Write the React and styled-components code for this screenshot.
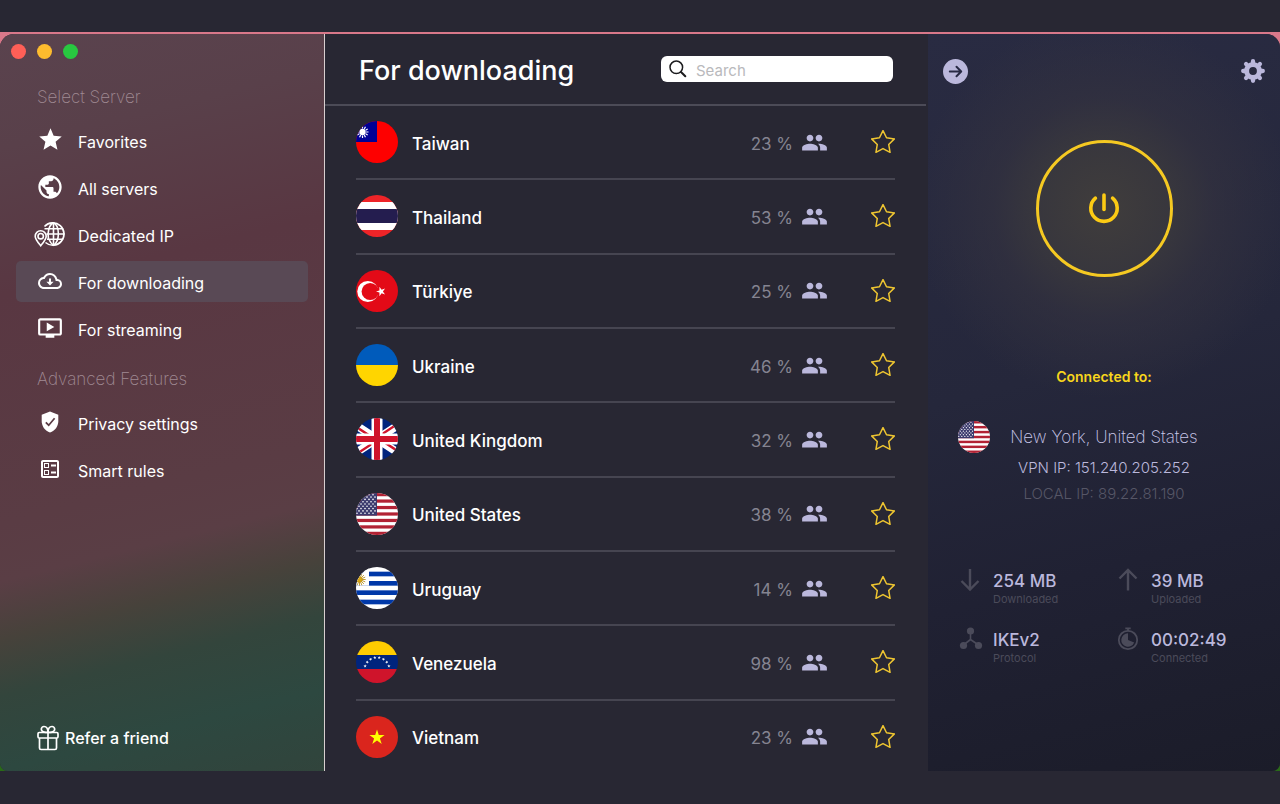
import { useState } from 'react'
import styled, { createGlobalStyle, css } from 'styled-components'
import { MdStar, MdPublic, MdOndemandVideo, MdOutlineBallot, MdPeople } from 'react-icons/md'

const star = (cx, cy, r, turn = 0, inner = 0.382) =>
  Array.from({ length: 10 }, (_, i) => {
    const a = ((i * 36 - 90 + turn) * Math.PI) / 180
    const d = i % 2 ? r * inner : r
    return `${(cx + d * Math.cos(a)).toFixed(2)},${(cy + d * Math.sin(a)).toFixed(2)}`
  }).join(' ')

const rays = (cx, cy, from, to, count) =>
  Array.from({ length: count }, (_, i) => {
    const a = (i * 2 * Math.PI) / count
    return `M${(cx + from * Math.cos(a)).toFixed(2)} ${(cy + from * Math.sin(a)).toFixed(2)}L${(cx + to * Math.cos(a)).toFixed(2)} ${(cy + to * Math.sin(a)).toFixed(2)}`
  }).join('')

/* flags, each one on a 42 x 42 square that the circle cuts */

const usStars = []
for (let row = 0; row < 9; row++) {
  for (let col = 0; col < 6; col++) {
    const x = 1 + col * 4 + (row % 2 ? 2 : 0)
    if (x < 21) usStars.push([x, 1.8 + row * 2.3])
  }
}

const flags = {
  tw: (
    <>
      <rect width="42" height="42" fill="#fe0000" />
      <rect width="21" height="21" fill="#000095" />
      <circle cx="6.5" cy="11" r="3.2" fill="#fff" />
      <path d={rays(6.5, 11, 3.6, 6, 12)} stroke="#fff" strokeWidth="1.2" />
    </>
  ),
  th: (
    <>
      <rect width="42" height="42" fill="#ee2428" />
      <rect y="7" width="42" height="28" fill="#fff" />
      <rect y="14" width="42" height="14" fill="#241d4f" />
    </>
  ),
  tr: (
    <>
      <rect width="42" height="42" fill="#e30a17" />
      <circle cx="11.8" cy="21.5" r="10.5" fill="#fff" />
      <circle cx="14.2" cy="21.5" r="8.6" fill="#e30a17" />
      <polygon points={star(25, 21.5, 5, -90)} fill="#fff" />
    </>
  ),
  ua: (
    <>
      <rect width="42" height="21" fill="#005bbb" />
      <rect y="21" width="42" height="21" fill="#ffd500" />
    </>
  ),
  gb: (
    <>
      <rect width="42" height="42" fill="#00247d" />
      <path d="M-14 -2L56 44M56 -2L-14 44" stroke="#fff" strokeWidth="8" />
      <path d="M-14 -0.4L21 22.6M56 -3.6L21 19.4M-14 45.6L21 22.6M56 42.4L21 19.4" stroke="#cf142b" strokeWidth="2.4" />
      <path d="M21 0V42M0 21H42" stroke="#fff" strokeWidth="11" />
      <path d="M21 0V42M0 21H42" stroke="#cf142b" strokeWidth="6" />
    </>
  ),
  us: (
    <>
      <rect width="42" height="42" fill="#fff" />
      {[0, 2, 4, 6, 8, 10, 12].map((n) => (
        <rect key={n} y={(n * 42) / 13} width="42" height={42 / 13} fill="#b22234" />
      ))}
      <rect width="21" height={(42 / 13) * 7} fill="#3c3b6e" />
      {usStars.map(([x, y]) => (
        <circle key={`${x}-${y}`} cx={x} cy={y} r="0.8" fill="#fff" />
      ))}
    </>
  ),
  uy: (
    <>
      <rect width="42" height="42" fill="#fff" />
      {[1, 3, 5, 7].map((n) => (
        <rect key={n} y={(n * 42) / 9} width="42" height={42 / 9} fill="#0038a8" />
      ))}
      <rect width="13" height="18.7" fill="#fff" />
      <circle cx="3.5" cy="12.5" r="3" fill="#d9a514" />
      <path d={rays(3.5, 12.5, 2.5, 6.2, 16)} stroke="#b8901f" strokeWidth="0.9" />
    </>
  ),
  ve: (
    <>
      <rect width="42" height="14" fill="#ffcc00" />
      <rect y="14" width="42" height="14" fill="#00247d" />
      <rect y="28" width="42" height="14" fill="#cf142b" />
      {[-72, -51, -31, -10, 10, 31, 51, 72].map((deg) => {
        const a = (deg * Math.PI) / 180
        return <polygon key={deg} points={star(21 + 12.5 * Math.sin(a), 29 - 12.5 * Math.cos(a), 1.8, deg)} fill="#fff" />
      })}
    </>
  ),
  vn: (
    <>
      <rect width="42" height="42" fill="#da251d" />
      <polygon points={star(21, 21.5, 8)} fill="#ffff00" />
    </>
  ),
}

const servers = [
  { code: 'tw', name: 'Taiwan', load: 23 },
  { code: 'th', name: 'Thailand', load: 53 },
  { code: 'tr', name: 'Türkiye', load: 25 },
  { code: 'ua', name: 'Ukraine', load: 46 },
  { code: 'gb', name: 'United Kingdom', load: 32 },
  { code: 'us', name: 'United States', load: 38 },
  { code: 'uy', name: 'Uruguay', load: 14 },
  { code: 've', name: 'Venezuela', load: 98 },
  { code: 'vn', name: 'Vietnam', load: 23 },
]

/* icons */

const DedicatedIcon = () => (
  <svg width="32" height="26" viewBox="0 0 32 26" fill="none" stroke="currentColor" strokeWidth="1.6">
    <path d="M10.5 5.5A11.2 11.2 0 1 1 11.5 21.5" />
    <path d="M14.5 18C13.2 11 15 4 19.5 1.8C26 5 26 20 19.5 24.2C17.6 23 16.2 21.2 15.3 19" />
    <path d="M19.5 1.8V24.2M10.5 7.7H29.2M12.5 13H30.7M13 18.3H29.2" />
    <path d="M6.7 24.8C3.5 20.8 1.2 18.2 1.2 15.2A5.5 5.5 0 0 1 12.2 15.2C12.2 18.2 9.9 20.8 6.7 24.8Z" />
    <circle cx="6.7" cy="15.2" r="2.7" />
  </svg>
)

const CloudIcon = () => (
  <svg width="24" height="24" viewBox="0 0 24 24" fill="currentColor">
    <path d="M19.35 10.04A7.49 7.49 0 0 0 12 4C9.11 4 6.6 5.64 5.35 8.04A5.994 5.994 0 0 0 0 14c0 3.31 2.69 6 6 6h13c2.76 0 5-2.24 5-5 0-2.64-2.05-4.78-4.65-4.96zM19 18H6c-2.21 0-4-1.79-4-4 0-2.05 1.53-3.76 3.56-3.97l1.07-.11.5-.95A5.469 5.469 0 0 1 12 6c2.62 0 4.88 1.86 5.39 4.43l.3 1.5 1.53.11A2.98 2.98 0 0 1 22 15c0 1.65-1.35 3-3 3z" />
    <path d="M11 9.5h2v3.3h2.6L12 16.4l-3.6-3.6H11z" />
  </svg>
)

const ShieldIcon = () => (
  <svg width="24" height="24" viewBox="0 0 24 24">
    <path d="M12 1.5L20.3 4.7V11C20.3 16.5 17 20.7 12 22.5C7 20.7 3.7 16.5 3.7 11V4.7Z" fill="currentColor" />
    <path d="M7.8 12.3L10.7 15.2L16.6 8.3" fill="none" stroke="#5a3b44" strokeWidth="1.7" />
  </svg>
)

const GiftIcon = () => (
  <svg width="22" height="26" viewBox="0 0 22 26" fill="none" stroke="currentColor" strokeWidth="1.7" strokeLinejoin="round">
    <rect x="1" y="7.5" width="20" height="5.5" rx="1.2" />
    <path d="M2.5 13V23A1.5 1.5 0 0 0 4 24.5H18A1.5 1.5 0 0 0 19.5 23V13M11 7.5V24.5" />
    <path d="M11 7.5C7 7.5 4.3 6.5 4.3 4.2C4.3 2.6 5.5 1.5 7 1.5C9.5 1.5 11 4 11 7.5ZM11 7.5C15 7.5 17.7 6.5 17.7 4.2C17.7 2.6 16.5 1.5 15 1.5C12.5 1.5 11 4 11 7.5Z" />
  </svg>
)

const SearchIcon = () => (
  <svg width="18" height="18" viewBox="0 0 18 18" fill="none" stroke="#1c1c1e" strokeLinecap="round">
    <circle cx="7.3" cy="7.3" r="6.3" strokeWidth="1.5" />
    <path d="M12 12L16.3 16.3" strokeWidth="2" />
  </svg>
)

const StarOutline = () => (
  <svg width="24" height="24" viewBox="0 0 24 24" fill="none" stroke="#eec531" strokeWidth="1.5" strokeLinejoin="round">
    <polygon points={star(12, 12.6, 12, 0, 0.5)} />
  </svg>
)

const ArrowCircle = () => (
  <svg width="26" height="26" viewBox="0 0 26 26">
    <circle cx="12.5" cy="13.5" r="12.5" fill="#bbb8dc" />
    <path d="M6.800 13.500H18M13.500 8.800L18.200 13.500L13.500 18.200" fill="none" stroke="#282a44" strokeWidth="2" strokeLinecap="round" strokeLinejoin="round" />
  </svg>
)

const GearIcon = () => (
  <svg width="24" height="24" viewBox="0 0 24 24">
    <circle cx="12" cy="12" r="6.4" fill="none" stroke="#bbb8dc" strokeWidth="5" />
    <path d={rays(12, 12, 7.5, 9.8, 8)} stroke="#bbb8dc" strokeWidth="4.3" strokeLinecap="round" />
  </svg>
)

const PowerIcon = () => (
  <svg width="32" height="32" viewBox="0 0 32 32" fill="none" stroke="#fccb14" strokeWidth="3.6" strokeLinecap="round">
    <path d="M7.4 5.2A13.2 13.2 0 1 0 24.6 5.2" />
    <path d="M16 2V16.5" />
  </svg>
)

const ArrowIcon = ({ up }) => (
  <svg width="26" height="26" viewBox="0 0 26 26" fill="none" stroke="currentColor" strokeWidth="2.4">
    <path d={up ? 'M12 23.5V3M3.5 11.5L12 3L20.5 11.5' : 'M12 2V22.5M3.5 14L12 22.5L20.5 14'} />
  </svg>
)

const NodesIcon = () => (
  <svg width="26" height="26" viewBox="0 0 26 26" fill="currentColor">
    <circle cx="12.5" cy="5" r="3.6" />
    <circle cx="5.5" cy="19.500" r="3.600" />
    <circle cx="20.5" cy="19.500" r="3.600" />
    <path d="M12.500 6V13.500M12.500 13.500L5.500 19M12.500 13.500L20.500 19" fill="none" stroke="currentColor" strokeWidth="1.6" />
  </svg>
)

const TimerIcon = () => (
  <svg width="26" height="26" viewBox="0 0 26 26" fill="none" stroke="currentColor">
    <circle cx="12" cy="14" r="9.2" strokeWidth="1.8" />
    <path d="M9.3 2.3H14.7M12 2.5V5" strokeWidth="1.8" />
    <path d="M12 14V7.3A6.7 6.7 0 1 0 18.200 16.500Z" fill="currentColor" stroke="none" />
  </svg>
)

const mainLinks = [
  { label: 'Favorites', icon: <MdStar size={27} /> },
  { label: 'All servers', icon: <MdPublic size={28} /> },
  { label: 'Dedicated IP', icon: <DedicatedIcon /> },
  { label: 'For downloading', icon: <CloudIcon /> },
  { label: 'For streaming', icon: <MdOndemandVideo size={26} /> },
]

const advancedLinks = [
  { label: 'Privacy settings', icon: <ShieldIcon /> },
  { label: 'Smart rules', icon: <MdOutlineBallot size={24} /> },
]

const stats = [
  { icon: <ArrowIcon />, value: '254 MB', label: 'Downloaded' },
  { icon: <ArrowIcon up />, value: '39 MB', label: 'Uploaded' },
  { icon: <NodesIcon />, value: 'IKEv2', label: 'Protocol' },
  { icon: <TimerIcon />, value: '00:02:49', label: 'Connected' },
]

const Flag = ({ code, size }) => (
  <FlagCircle viewBox="0 0 42 42" $size={size} aria-hidden="true">
    {flags[code]}
  </FlagCircle>
)

const App = () => {
  const [section, setSection] = useState('For downloading')
  const [search, setSearch] = useState('')

  const visible = servers.filter((s) => s.name.toLowerCase().includes(search.toLowerCase()))

  const renderLinks = (links) => (
    <NavList>
      {links.map(({ label, icon }) => (
        <li key={label}>
          <NavButton type="button" $active={section === label} onClick={() => setSection(label)}>
            <NavIcon>{icon}</NavIcon>
            {label}
          </NavButton>
        </li>
      ))}
    </NavList>
  )

  return (
    <>
      <GlobalStyle />
      <Desktop>
        <Window>
          <Sidebar>
            <Lights>
              <Light type="button" aria-label="Close" $color="#ff5f57" />
              <Light type="button" aria-label="Minimize" $color="#febc2e" />
              <Light type="button" aria-label="Zoom" $color="#28c840" />
            </Lights>
            <NavTitle>Select Server</NavTitle>
            {renderLinks(mainLinks)}
            <NavTitle>Advanced Features</NavTitle>
            {renderLinks(advancedLinks)}
            <Refer href="#refer"><GiftIcon />Refer a friend</Refer>
          </Sidebar>

          <Main>
            <Header>
              <h1>{section}</h1>
              <SearchBox>
                <SearchIcon />
                <input type="text" aria-label="Search" placeholder="Search" value={search} onChange={(e) => setSearch(e.target.value)} />
              </SearchBox>
            </Header>
            <ServerList>
              {visible.map(({ code, name, load }) => (
                <ServerRow key={code}>
                  <Flag code={code} size={42} />
                  <ServerName>{name}</ServerName>
                  <Load><span>{load} %</span><MdPeople size={27} /></Load>
                  <IconButton type="button" aria-label={`Add ${name} to favorites`}><StarOutline /></IconButton>
                </ServerRow>
              ))}
            </ServerList>
          </Main>

          <Status>
            <StatusBar>
              <IconButton type="button" aria-label="Collapse"><ArrowCircle /></IconButton>
              <IconButton type="button" aria-label="Settings"><GearIcon /></IconButton>
            </StatusBar>
            <PowerButton type="button" aria-label="Disconnect"><PowerIcon /></PowerButton>
            <Connected>Connected to:</Connected>
            <Place>
              <Flag code="us" size={32} />
              <span>New York, United States</span>
            </Place>
            <Address>VPN IP: 151.240.205.252</Address>
            <Address $dim>LOCAL IP: 89.22.81.190</Address>
            <Stats>
              {stats.map(({ icon, value, label }) => (
                <Stat key={label}>
                  {icon}
                  <div>
                    <strong>{value}</strong>
                    <small>{label}</small>
                  </div>
                </Stat>
              ))}
            </Stats>
          </Status>
        </Window>
      </Desktop>
    </>
  )
}

export default App

const GlobalStyle = createGlobalStyle`
  * {
    box-sizing: border-box;
  }

  body {
    margin: 0;
    background: #282733;
    color: #fff;
    font-family: Inter, "Liberation Sans", sans-serif;
  }

  button, input {
    font: inherit;
    color: inherit;
  }

  h1, h2, p, ul {
    margin: 0;
    padding: 0;
    font-weight: 400;
    list-style: none;
  }

  svg {
    display: block;
    flex-shrink: 0;
  }
`;

const Desktop = styled.div`
  margin: 32px 0 33px;
  padding-top: 2px;
  background: linear-gradient(#d9788a, #c06070 50%, #2a6a18 95%);
`;

const Window = styled.div`
  display: grid;
  grid-template-columns: 325px minmax(0, 1fr) 352px;
  height: calc(100dvh - 67px);
  min-height: 700px;
  border-radius: 14px 14px 8px 8px;
  overflow: hidden;
  background: #282733;
`;

const Sidebar = styled.nav`
  display: flex;
  flex-direction: column;
  padding: 0 16px;
  border-right: 1px solid #d8cfd0;
  background: linear-gradient(166deg, #5a434e 0%, #59404a 14%, #593742 32%, #5a3c44 60%, #5a3e45 67%, #47423b 74%, #33453c 81%, #2d4840 90%, #31443c 100%);
`;

const Lights = styled.div`
  display: flex;
  gap: 11px;
  height: 36px;
  margin-left: -5px;
  padding-top: 10px;
`;

const Light = styled.button`
  width: 15px;
  height: 15px;
  padding: 0;
  border: none;
  border-radius: 50%;
  background: ${({ $color }) => $color};
`;

const NavTitle = styled.h2`
  padding: 17px 21px 13px;
  font-size: 17px;
  font-weight: 200;
  line-height: 20px;
  color: #a08a93;

  ul + & {
    padding-top: 20px;
  }
`;

const NavList = styled.ul`
  display: grid;
  gap: 6px;
`;

const NavButton = styled.button`
  display: flex;
  align-items: center;
  gap: 11px;
  width: 100%;
  height: 41px;
  padding: 2px 17px 0;
  border: none;
  border-radius: 5px;
  background: ${({ $active }) => ($active ? '#594955' : 'transparent')};
  font-size: 16px;
  text-align: left;
  cursor: pointer;
`;

const NavIcon = styled.span`
  display: flex;
  justify-content: center;
  width: 34px;
  padding-bottom: 4px;
`;

const Refer = styled.a`
  display: flex;
  align-items: center;
  gap: 6px;
  margin: auto 0 20px 21px;
  font-size: 16px;
  font-weight: 500;
  color: inherit;
  text-decoration: none;
`;

const Main = styled.main`
  display: flex;
  flex-direction: column;
  min-width: 0;
`;

const Header = styled.header`
  display: flex;
  align-items: center;
  justify-content: space-between;
  height: 72px;
  margin-right: 2px;
  padding: 0 33px 0 34px;
  border-bottom: 2px solid #4c4b57;

  h1 {
    padding-top: 3px;
    font-size: 27px;
    font-weight: 500;
  }
`;

const SearchBox = styled.label`
  display: flex;
  align-items: center;
  gap: 9px;
  width: 232px;
  height: 26px;
  padding: 0 8px;
  border-radius: 6px;
  background: #fff;

  input {
    width: 100%;
    padding: 2px 0 0;
    border: none;
    outline: none;
    background: none;
    color: #1c1c1e;
    font-size: 15px;
  }

  input::placeholder {
    color: #b9b9bc;
  }
`;

/* the last row runs a little past the bottom edge of the window */
const ServerList = styled.ul`
  display: grid;
  grid-auto-rows: minmax(74px, 1fr);
  flex: 1;
  margin-bottom: -4px;
  padding: 0 33px 0 31px;
`;

const ServerRow = styled.li`
  display: flex;
  align-items: center;
  border-bottom: 2px solid #464551;

  &:last-child {
    border-color: transparent;
  }
`;

const FlagCircle = styled.svg`
  width: ${({ $size }) => $size}px;
  height: ${({ $size }) => $size}px;
  border-radius: 50%;
`;

const ServerName = styled.span`
  flex: 1;
  padding: 3px 14px 0;
  font-size: 17px;
  font-weight: 500;
`;

const Load = styled.span`
  display: flex;
  align-items: center;
  gap: 8px;
  margin-right: 43px;
  font-size: 17px;
  color: #858491;

  span {
    padding-top: 3px;
  }

  svg {
    color: #bbb8dc;
  }
`;

const IconButton = styled.button`
  padding: 0;
  border: none;
  background: none;
  cursor: pointer;
`;

const Status = styled.aside`
  display: flex;
  flex-direction: column;
  background:
    radial-gradient(circle at 50% 174px, #403d3c 0, #3c3a3dcc 68px, #35333f99 110px, transparent 190px),
    linear-gradient(165deg, #292b42 0%, #25273b 45%, #202133 70%, #1b1c29 100%);
`;

const StatusBar = styled.div`
  display: flex;
  align-items: center;
  justify-content: space-between;
  padding: 24px 15px 0;
`;

const PowerButton = styled.button`
  display: grid;
  place-items: center;
  width: 137px;
  height: 137px;
  margin: 56px auto 0;
  padding: 0;
  border: 3px solid #f5c922;
  border-radius: 50%;
  background: none;
  cursor: pointer;
`;

const Connected = styled.p`
  margin-top: 90px;
  font-size: 14px;
  font-weight: 600;
  line-height: 20px;
  text-align: center;
  color: #f8d61c;
`;

const Place = styled.div`
  display: grid;
  grid-template-columns: 32px 1fr 32px;
  align-items: center;
  margin-top: 34px;
  padding: 0 30px;
  font-size: 17px;
  font-weight: 200;
  text-align: center;
  color: #cbc8ea;
`;

const Address = styled.p`
  padding-top: 4px;
  font-size: 15px;
  font-weight: 300;
  line-height: 22px;
  text-align: center;
  color: #bbb8dc;

  ${({ $dim }) => $dim && css`
    color: #565666;
  `}
`;

const Stats = styled.div`
  display: grid;
  grid-template-columns: 1fr 1fr;
  gap: 20px 24px;
  margin-top: 62px;
  padding: 0 30px;
`;

const Stat = styled.div`
  display: flex;
  gap: 9px;
  color: #4b4b5a;

  div {
    padding-top: 3px;
  }

  strong, small {
    display: block;
  }

  strong {
    font-size: 17px;
    font-weight: 500;
    line-height: 22px;
    color: #bbb8dc;
  }

  small {
    font-size: 11px;
    line-height: 14px;
  }
`;
